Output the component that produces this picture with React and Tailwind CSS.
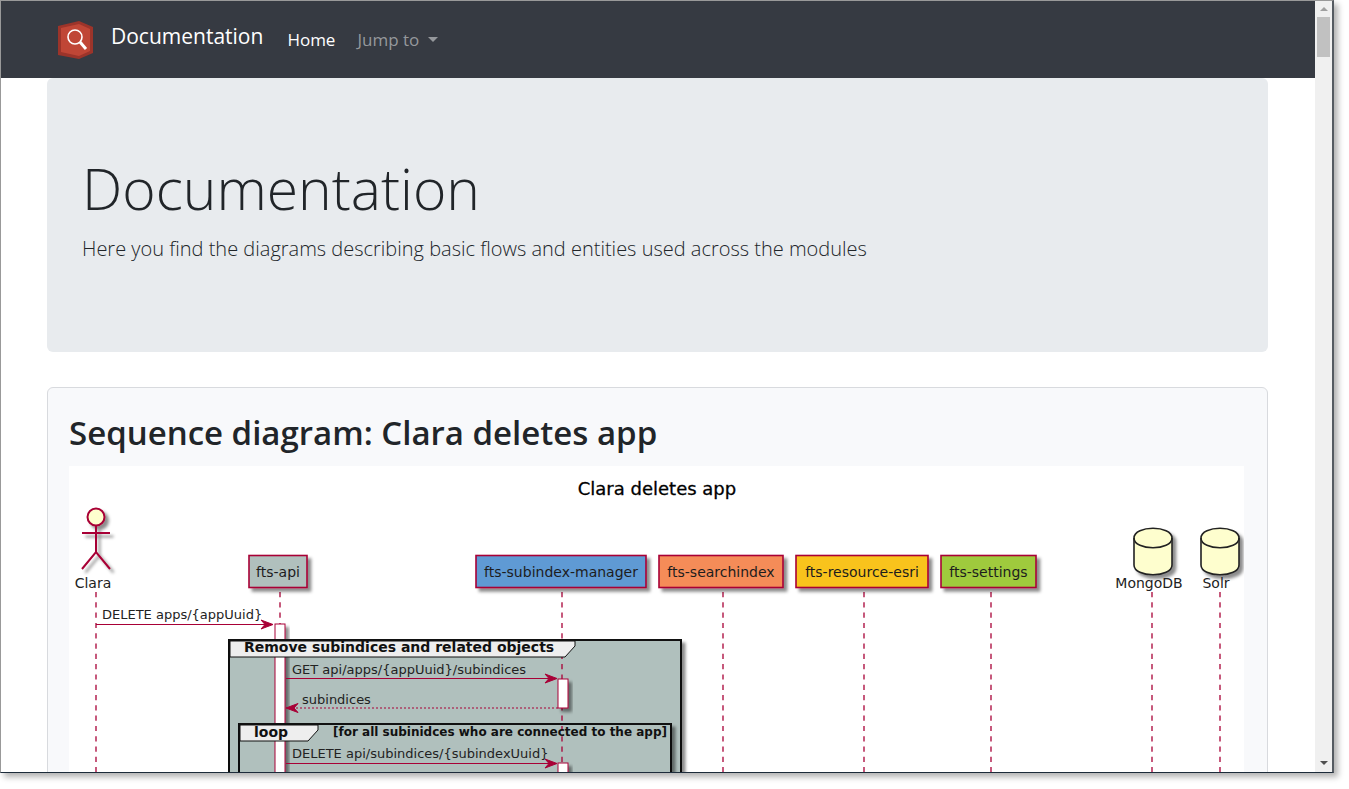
const participants = [
  { label: 'fts-api', x: 249, width: 58, fill: '#b0c0bd' },
  { label: 'fts-subindex-manager', x: 476, width: 170, fill: '#5f9ad4' },
  { label: 'fts-searchindex', x: 659, width: 124, fill: '#f58c58' },
  { label: 'fts-resource-esri', x: 796, width: 132, fill: '#f9c31b' },
  { label: 'fts-settings', x: 941, width: 95, fill: '#9fca3d' },
]

const lifelines = [96, 280, 562, 723, 864, 991, 1152, 1220]

const databases = [
  { label: 'MongoDB', x: 1153, labelX: 1149 },
  { label: 'Solr', x: 1220, labelX: 1216 },
]

function Logo() {
  return (
    <svg width="36" height="40" viewBox="0 0 36 40" aria-hidden="true">
      <path d="M21 1 L35 7 V33 L21 39 L0 35 V6 Z" fill="#9c342a" />
      <path d="M21 4 L32 9 V31 L21 36 L3 32 V8 Z" fill="#c04636" />
      <circle cx="17" cy="17" r="7" fill="none" stroke="#fff" strokeWidth="1.6" />
      <path d="M22 22 L28 29" stroke="#fff" strokeWidth="3" />
    </svg>
  )
}

function Navbar() {
  return (
    <nav className="flex h-[77px] items-center bg-[#363a42] pl-[57px] text-white">
      <a href="#" className="flex items-center">
        <Logo />
        <span className="ml-[17px] pb-2 text-[21px] leading-8">Documentation</span>
      </a>
      <a href="#" className="ml-6 text-[17px]">Home</a>
      <button className="ml-[22px] flex items-center gap-[9px] text-[17px] text-[#95989c]">
        Jump to
        <span className="border-x-5 border-t-5 border-x-transparent border-t-[#95989c]" />
      </button>
    </nav>
  )
}

function Arrow({ x, y, left }) {
  const d = left ? -1 : 1
  return (
    <path
      d={`M${x} ${y} l${-12 * d} -4.5 l${4 * d} 4.5 l${-4 * d} 4.5 Z`}
      fill="#a80036"
      stroke="#a80036"
    />
  )
}

function Activation({ x, y, height }) {
  return (
    <rect x={x} y={y} width="10" height={height} fill="#fff" stroke="#a80036" filter="url(#shadow)" />
  )
}

function SequenceDiagram() {
  return (
    <svg
      width="1175"
      height="420"
      viewBox="69 466 1175 420"
      className="h-auto max-w-full bg-white"
      fontFamily="'DejaVu Sans', sans-serif"
      fontSize="14"
      role="img"
      aria-label="Clara deletes app"
    >
      <defs>
        <filter id="shadow" x="-30%" y="-30%" width="180%" height="180%">
          <feDropShadow dx="3.5" dy="3.5" stdDeviation="1.5" floodOpacity="0.45" />
        </filter>
      </defs>

      <text x="657" y="495" fontSize="18" textAnchor="middle" stroke="#000" strokeWidth="0.3">
        Clara deletes app
      </text>

      <g filter="url(#shadow)">
        <rect x="229" y="640" width="452" height="260" fill="#b0c0bd" stroke="#111" strokeWidth="2" />
      </g>
      <g filter="url(#shadow)">
        <rect x="239" y="724" width="432" height="180" fill="#b0c0bd" stroke="#111" strokeWidth="2" />
      </g>

      {lifelines.map((x) => (
        <path
          key={x}
          d={`M${x} 592 V900`}
          stroke="#a80036"
          strokeWidth="1.3"
          strokeDasharray="5.2 5.1"
        />
      ))}

      <g filter="url(#shadow)" stroke="#a80036" strokeWidth="2" fill="none">
        <path d="M96 525 V552 M82 533 H110 M82 569 L96 552 L110 569" />
        <circle cx="96" cy="517" r="8.5" fill="#fefece" />
      </g>
      <text x="93" y="588" textAnchor="middle" fill="#222">Clara</text>

      {participants.map((item) => (
        <g key={item.label}>
          <rect
            x={item.x}
            y="555.5"
            width={item.width}
            height="32"
            fill={item.fill}
            stroke="#a80036"
            strokeWidth="1.6"
            filter="url(#shadow)"
          />
          <text x={item.x + item.width / 2} y="577" textAnchor="middle" fill="#1d1d1d">
            {item.label}
          </text>
        </g>
      ))}

      {databases.map((db) => (
        <g key={db.label}>
          <g fill="#fefece" stroke="#222" strokeWidth="1.6">
            <path
              d={`M${db.x - 19} 538 c0 -13 38 -13 38 0 v27 c0 13 -38 13 -38 0 Z`}
              filter="url(#shadow)"
            />
            <path d={`M${db.x - 19} 538 c0 13 38 13 38 0`} fill="none" />
          </g>
          <text x={db.labelX} y="588" textAnchor="middle" fill="#222">{db.label}</text>
        </g>
      ))}

      <Activation x={275} y={624} height={280} />
      <path d="M229 640 H681" stroke="#111" strokeWidth="2" />
      <path d="M239 724 H671" stroke="#111" strokeWidth="2" />
      <path d="M230 641 H575 V646 L565 657 H230 Z" fill="#eee" stroke="#111" />
      <path d="M240 725 H318 V730 L308 741 H240 Z" fill="#eee" stroke="#111" />
      <Activation x={558} y={679} height={29} />
      <Activation x={558} y={763} height={140} />

      <g fontWeight="bold" fill="#111">
        <text x="244" y="652">Remove subindices and related objects</text>
        <text x="254" y="737">loop</text>
        <text x="333" y="736" fontSize="12">[for all subinidces who are connected to the app]</text>
      </g>

      <g fontSize="13" fill="#222">
        <text x="102" y="619">DELETE apps/{'{appUuid}'}</text>
        <text x="292" y="674">GET api/apps/{'{appUuid}'}/subindices</text>
        <text x="302" y="704">subindices</text>
        <text x="292" y="758">DELETE api/subindices/{'{subindexUuid}'}</text>
      </g>

      <g stroke="#a80036" fill="none">
        <path d="M96 624.5 H272 M286 678.5 H556 M286 763.5 H556" />
        <path d="M288 708 H558" strokeDasharray="2 2" />
      </g>
      <Arrow x={273} y={624.5} />
      <Arrow x={557} y={678.5} />
      <Arrow x={557} y={763.5} />
      <Arrow x={286} y={708} left />
    </svg>
  )
}

function Scrollbar() {
  return (
    <div className="flex w-[17px] shrink-0 flex-col items-center bg-[#f0f0f0]">
      <div className="flex h-4 items-center">
        <span className="border-x-4 border-b-4 border-x-transparent border-b-[#a0a0a0]" />
      </div>
      <div className="h-10 w-[13px] bg-[#c1c1c1]" />
      <div className="mt-auto flex h-[18px] items-center">
        <span className="border-x-4 border-t-4 border-x-transparent border-t-[#505050]" />
      </div>
    </div>
  )
}

function App() {
  return (
    <div className="h-screen overflow-hidden bg-white pr-[15px] pb-4 font-['Open_Sans',sans-serif] text-[#212529]">
      <div className="flex h-full border border-t-[#999] border-r-2 border-r-[#555b62] border-b-[#1c2b3a] border-l-[#999] shadow-[4px_4px_6px_rgba(0,0,0,0.3)]">
        <div className="min-w-0 flex-1 overflow-hidden">
          <Navbar />
          <main className="pr-[47px] pl-[46px]">
            <header className="rounded-md bg-[#e8ebee] px-[35px] pt-[72px] pb-[87px]">
              <h1 className="text-[57px] leading-[76px] font-light">Documentation</h1>
              <p className="mt-[7px] text-[20px] leading-8 font-light">
                Here you find the diagrams describing basic flows and entities used across the modules
              </p>
            </header>

            <section className="mt-[35px] rounded-md border border-[#d8dade] bg-[#f8f9fb] px-[21px] pt-[23px]">
              <h2 className="mb-3 text-[33px] leading-[43px] font-semibold">
                Sequence diagram: Clara deletes app
              </h2>
              <SequenceDiagram />
            </section>
          </main>
        </div>
        <Scrollbar />
      </div>
    </div>
  )
}

export default App
